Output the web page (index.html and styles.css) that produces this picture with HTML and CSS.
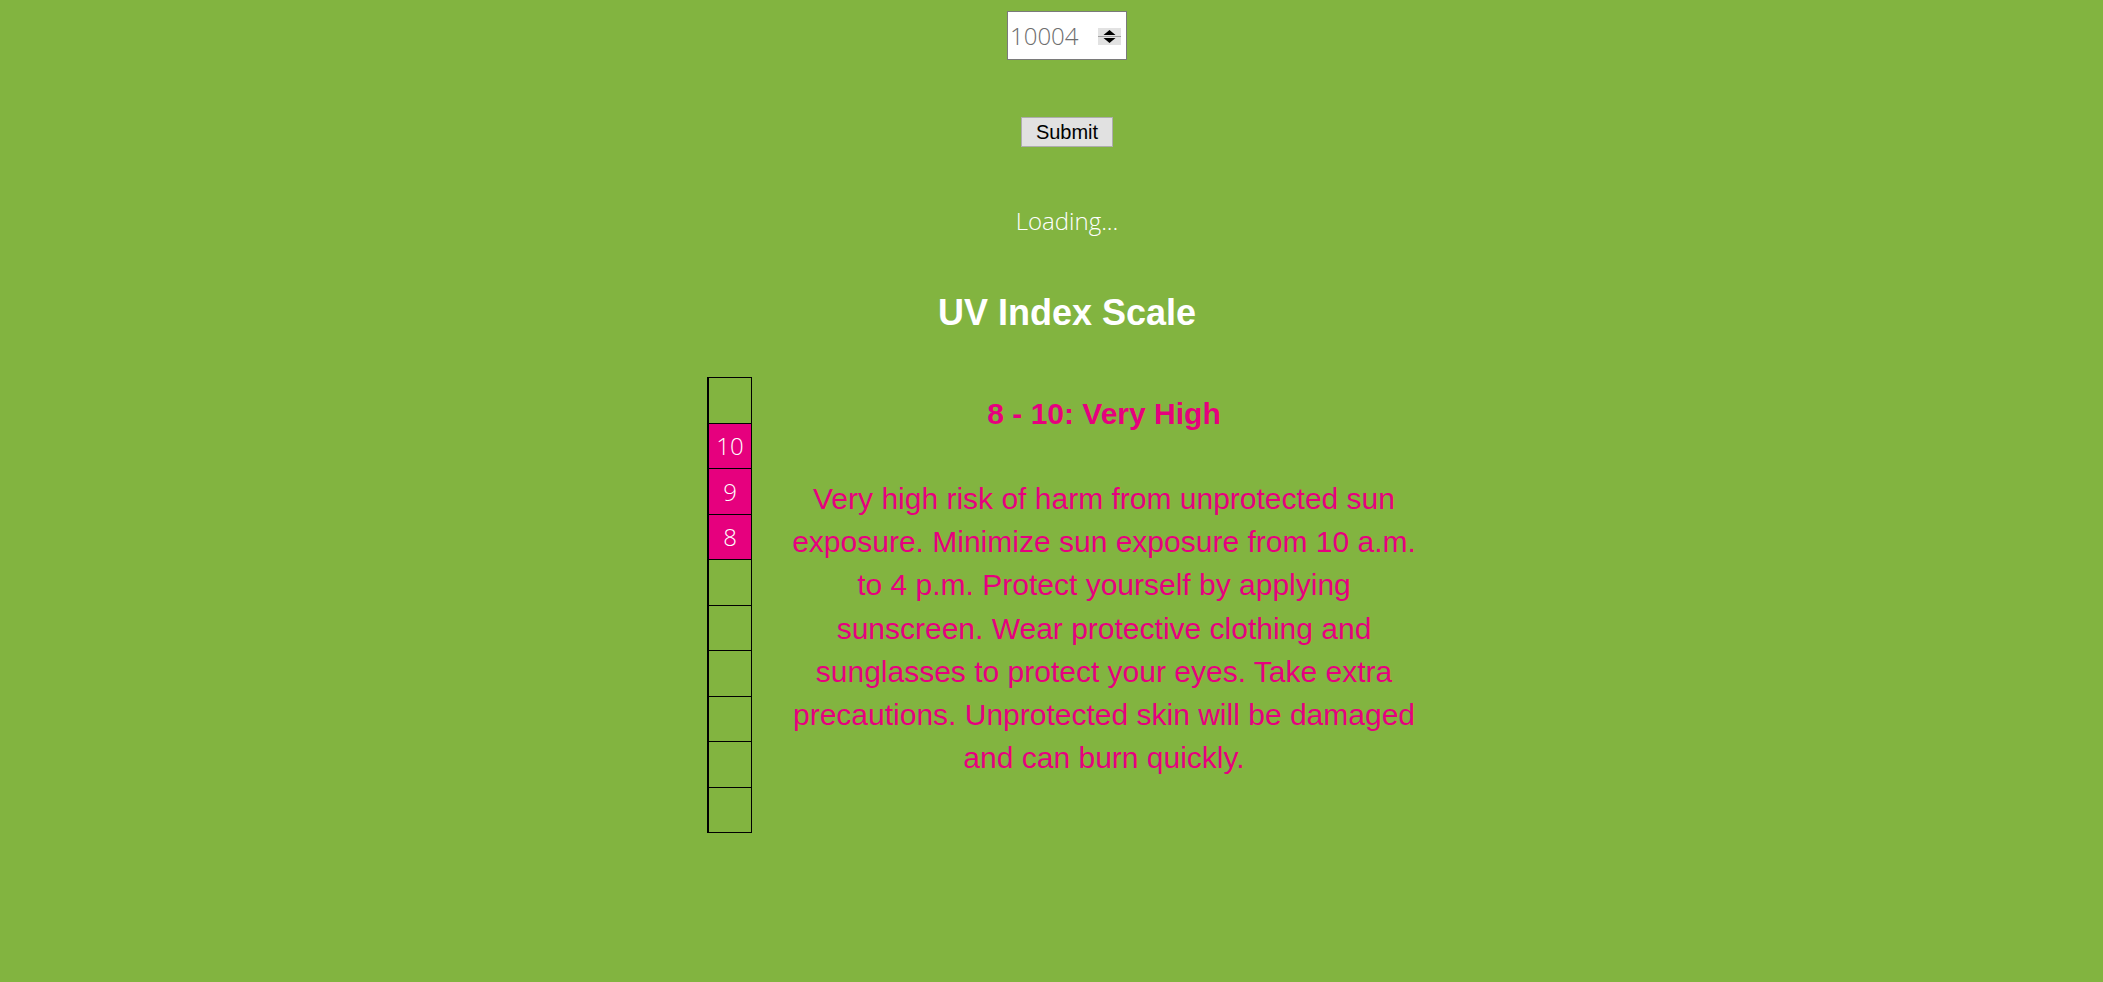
FILE: index.html
```html
<!DOCTYPE html>
<html lang="en">
<head>
  <meta charset="UTF-8" />
  <meta name="viewport" content="width=device-width, initial-scale=1.0"/>
  <title>UV Index</title>
  <link rel="stylesheet" href="styles.css">
</head>
<body>
  <div class="page">
    <form class="zip-form">
      <div class="zip-field">
        <input type="text" name="zip" value="10004" />
        <span class="spinner">
          <svg width="23" height="17" viewBox="0 0 23 17">
            <rect x="0" y="0" width="23" height="17" fill="#e2e2e2"/>
            <line x1="0" y1="8.5" x2="23" y2="8.5" stroke="#a0a0a0" stroke-width="1"/>
            <polygon points="5.5,7 17.5,7 11.5,2" fill="#000"/>
            <polygon points="5.5,10 17.5,10 11.5,15" fill="#000"/>
          </svg>
        </span>
      </div>
      <button type="submit">Submit</button>
    </form>

    <div class="status">Loading...</div>

    <h1 class="title">UV Index Scale</h1>

    <div class="scale">
      <div class="scale-bar">
        <div class="cell"></div>
        <div class="cell active">10</div>
        <div class="cell active">9</div>
        <div class="cell active">8</div>
        <div class="cell"></div>
        <div class="cell"></div>
        <div class="cell"></div>
        <div class="cell"></div>
        <div class="cell"></div>
        <div class="cell"></div>
      </div>
      <div class="scale-info">
        <h3>8 - 10: Very High</h3>
        <p>Very high risk of harm from unprotected sun exposure. Minimize sun exposure from 10 a.m. to 4 p.m. Protect yourself by applying sunscreen. Wear protective clothing and sunglasses to protect your eyes. Take extra precautions. Unprotected skin will be damaged and can burn quickly.</p>
      </div>
    </div>
  </div>
</body>
</html>
```

FILE: styles.css
```css
body {
  margin: 0;
  background: #82b440;
  font-family: 'Liberation Sans', Arial, sans-serif;
  color: white;
  height: 100vh;
}

.page {
  padding: 11px 0 0 31px;
  display: flex;
  flex-direction: column;
  align-items: center;
}

.zip-form {
  display: flex;
  flex-direction: column;
  align-items: center;
}

.zip-field {
  width: 120px;
  height: 49px;
  box-sizing: border-box;
  background: white;
  border: 1px solid #7a7a7a;
  display: flex;
  align-items: center;
}

.zip-field input {
  width: 88px;
  border: none;
  outline: none;
  padding: 0 0 0 2px;
  margin: 0;
  font-family: 'Open Sans', sans-serif;
  font-weight: 300;
  font-size: 24px;
  color: #6e6e6e;
  background: transparent;
}

.spinner {
  display: flex;
  margin-top: 2px;
}

button {
  margin-top: 57px;
  width: 92px;
  height: 30px;
  padding: 0;
  background-color: #e1e1e1;
  border: 1px solid #adadad;
  font-family: 'Liberation Sans', Arial, sans-serif;
  font-size: 20px;
  color: black;
  cursor: pointer;
}

.status {
  margin-top: 58px;
  font-family: 'Open Sans', sans-serif;
  font-weight: 300;
  font-size: 24px;
  line-height: 32px;
}

.title {
  margin: 56px 0 0;
  font-size: 36px;
  line-height: 40px;
}

.scale {
  margin-top: 44px;
  width: 720px;
  display: flex;
  align-items: flex-start;
}

.scale-bar {
  width: 45px;
  box-sizing: border-box;
  border-left: 2px solid #000;
  border-top: 1px solid #000;
}

.cell {
  height: 44.5px;
  border-right: 1px solid #000;
  border-bottom: 1px solid #000;
  display: flex;
  align-items: center;
  justify-content: center;
  font-family: 'Open Sans', sans-serif;
  font-weight: 300;
  font-size: 24px;
}

.cell.active {
  background: #e6007e;
}

.scale-info {
  flex: 1;
  margin-left: 29px;
  text-align: center;
  color: #e6007e;
}

.scale-info h3 {
  margin: 21px 0 47px;
  font-size: 30px;
  line-height: 32px;
}

.scale-info p {
  margin: 0;
  font-size: 30px;
  line-height: 43.2px;
}
```
